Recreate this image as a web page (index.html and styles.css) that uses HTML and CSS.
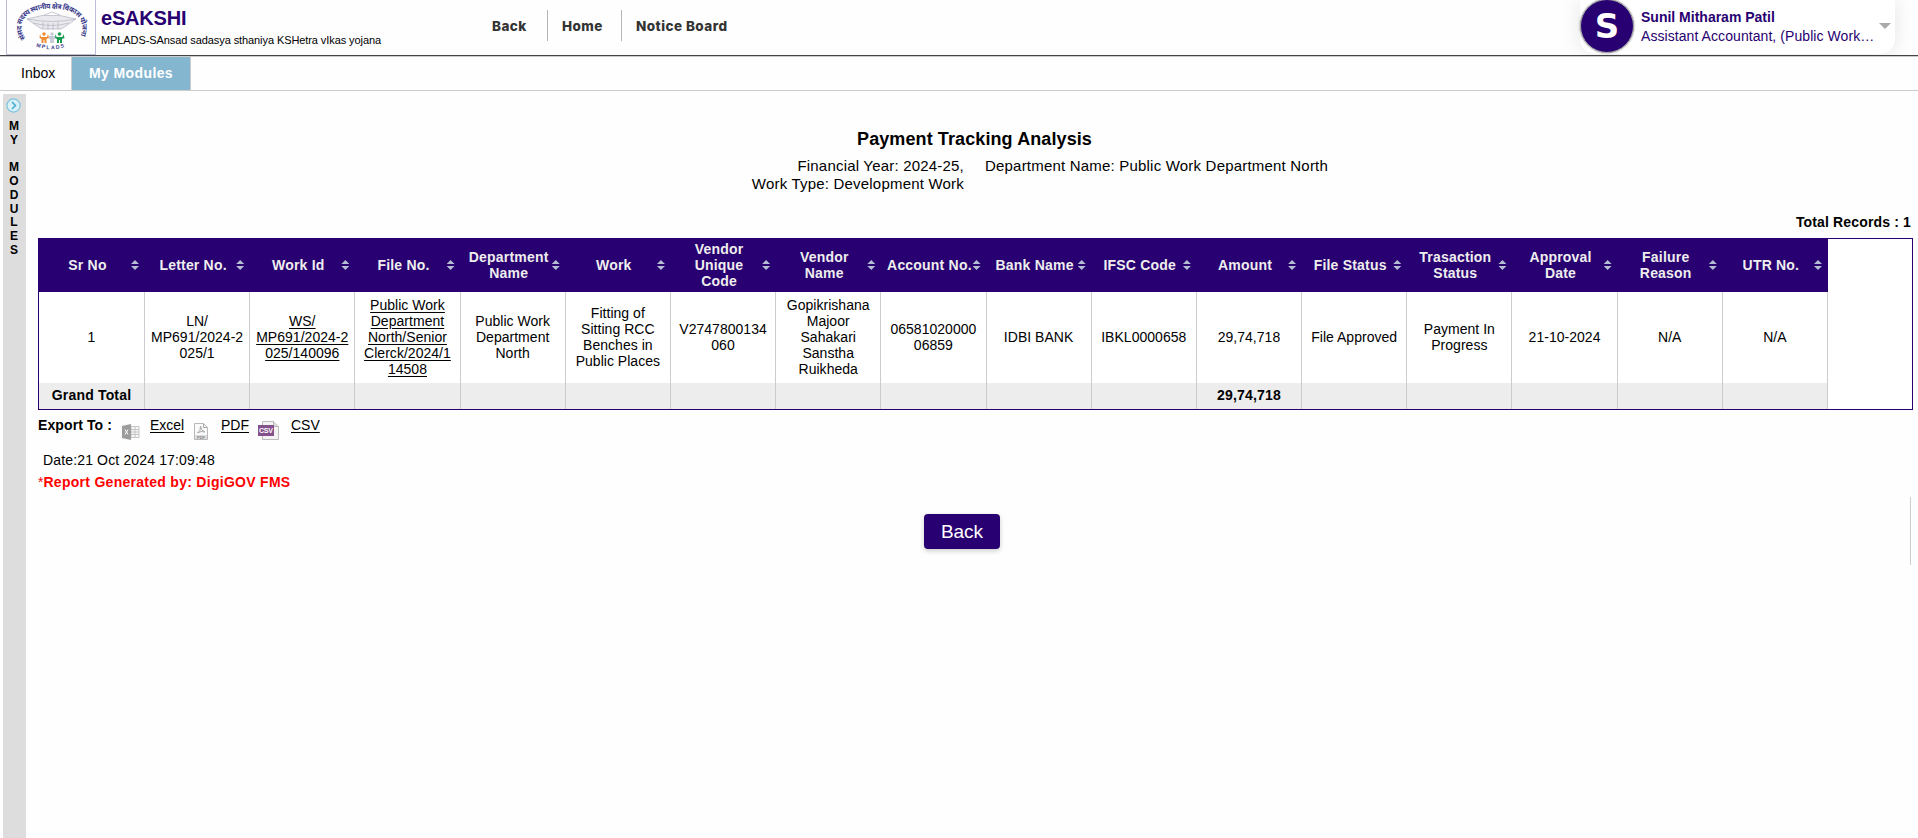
FILE: index.html
```html
<!DOCTYPE html>
<html lang="en">
<head>
<meta charset="utf-8">
<title>eSAKSHI</title>
<link rel="stylesheet" href="styles.css">
</head>
<body>
<header class="header">
  <div class="logo">
    <svg width="88" height="54" viewBox="0 0 88 54">
      <path id="arcTop" d="M19 39 C7 22 20 8.500 45 8.500 C70 8.500 82 22 71 41" fill="none"/>
      <path id="arcBottom" d="M29 46.500 Q44.500 52 61 46" fill="none"/>
      <text class="logo-hindi"><textPath href="#arcTop" textLength="100">संसद सदस्य स्थानीय क्षेत्र विकास योजना</textPath></text>
      <g fill="#e9e9ee" stroke="#b3b3c2" stroke-width=".7">
        <path d="M20 19 L35 15.500 H53 L69 19 L59 26 L54 29 H35 L30 26 Z"/>
        <path d="M20 19 Q45 24 69 19 M26 23 Q45 28 62 23 M37 15 L45 12 L53 15 M36 22 V29 M41 23 V30 M46 23 V30 M51 22 V29" fill="none"/>
      </g>
      <g fill="#ef8d32"><circle cx="37" cy="34" r="1.800"/><path d="M33 34 L34 37 H40 L41 34 L42 38 L39.500 39 V43 H37.500 V40 H36.500 V43 H34.500 V39 L32.500 38Z"/></g>
      <g fill="#c9cbd8"><circle cx="45" cy="34" r="1.700"/><path d="M42 36 H48 V39 H47 V43 H43 V39 H42Z"/></g>
      <g fill="#199b50"><circle cx="52.500" cy="34" r="1.800"/><path d="M48.500 34 L49.500 37 H55.500 L56.500 34 L57.500 38 L55 39 V43 H53 V40 H52 V43 H50 V39 L48 38Z"/></g>
      <text class="logo-latin"><textPath href="#arcBottom" textLength="29">MPLADS</textPath></text>
    </svg>
  </div>
  <div class="brand">
    <div class="brand-name">eSAKSHI</div>
    <div class="brand-sub">MPLADS-SAnsad sadasya sthaniya KSHetra vIkas yojana</div>
  </div>
  <nav class="nav"><a class="nav-back">Back</a><a class="nav-home">Home</a><a class="nav-board">Notice Board</a></nav>
  <div class="user">
    <div class="avatar">S</div>
    <div class="user-text">
      <div class="user-name">Sunil Mitharam Patil</div>
      <div class="user-role">Assistant Accountant, (Public Work…</div>
    </div>
    <span class="caret"></span>
  </div>
</header>
<div class="tabs"><div class="tab">Inbox</div><div class="tab tab-active">My Modules</div></div>
<div class="page">
  <aside class="side">
    <svg width="15" height="15" viewBox="0 0 15 15"><circle cx="7.500" cy="7.500" r="6.600" fill="#d9f1f9" stroke="#7cc3dc" stroke-width="1.200"/><path d="M6 4 L9.500 7.500 L6 11" fill="none" stroke="#45a9cc" stroke-width="1.500"/></svg>
    <div class="side-text"><span>M</span><span>Y</span><span></span><span>M</span><span>O</span><span>D</span><span>U</span><span>L</span><span>E</span><span>S</span></div>
  </aside>
  <main class="main">
    <h1 class="title">Payment Tracking Analysis</h1>
    <div class="filters">
      <div class="filters-left">Financial Year: 2024-25,<br>Work Type: Development Work</div>
      <div class="filters-right">Department Name: Public Work Department North</div>
    </div>
    <div class="records">Total Records : 1</div>
    <div class="table-box">
      <table class="grid">
        <colgroup><col class="col-first"><col span="16"></colgroup>
        <thead><tr>
          <th>Sr No<i></i></th><th>Letter No.<i></i></th><th>Work Id<i></i></th><th>File No.<i></i></th><th>Department<br>Name<i></i></th><th>Work<i></i></th><th>Vendor<br>Unique<br>Code<i></i></th><th>Vendor<br>Name<i></i></th><th>Account No.<i></i></th><th>Bank Name<i></i></th><th>IFSC Code<i></i></th><th>Amount<i></i></th><th>File Status<i></i></th><th>Trasaction<br>Status<i></i></th><th>Approval<br>Date<i></i></th><th>Failure<br>Reason<i></i></th><th>UTR No.<i></i></th>
        </tr></thead>
        <tbody>
        <tr class="row">
          <td>1</td><td>LN/<br>MP691/2024-2<br>025/1</td><td><a>WS/<br>MP691/2024-2<br>025/140096</a></td><td><a>Public Work<br>Department<br>North/Senior<br>Clerck/2024/1<br>14508</a></td><td>Public Work<br>Department<br>North</td><td>Fitting of<br>Sitting RCC<br>Benches in<br>Public Places</td><td>V2747800134<br>060</td><td>Gopikrishana<br>Majoor<br>Sahakari<br>Sanstha<br>Ruikheda</td><td>06581020000<br>06859</td><td>IDBI BANK</td><td>IBKL0000658</td><td>29,74,718</td><td>File Approved</td><td>Payment In<br>Progress</td><td>21-10-2024</td><td>N/A</td><td>N/A</td>
        </tr>
        <tr class="total">
          <td>Grand Total</td><td></td><td></td><td></td><td></td><td></td><td></td><td></td><td></td><td></td><td></td><td>29,74,718</td><td></td><td></td><td></td><td></td><td></td>
        </tr>
        </tbody>
      </table>
    </div>
    <div class="export">
      <b class="export-label">Export To :</b>
      <svg class="ic-xls" width="18" height="16" viewBox="0 0 18 16"><path d="M9 2.500h8v11H9z" fill="#f8f8f8" stroke="#c4c4c4"/><path d="M9 5.500h8M9 8h8M9 10.500h8M13 2.500v11" stroke="#c4c4c4"/><path d="M0 2 L9 0 V16 L0 14Z" fill="#9c9c9c"/><path d="M3 5.500 L6 10.500 M6 5.500 L3 10.500" stroke="#fff"/></svg>
      <a class="lk-xls">Excel</a>
      <svg class="ic-pdf" width="14" height="17" viewBox="0 0 14 17"><path d="M.5.500h9l4 4v12H.5z" fill="#fafafa" stroke="#b9b9b9"/><path d="M9.500.500v4h4M3.500 10 Q7 8 6.500 3 Q7 8 11 9 Q7 7.500 3.500 10" fill="none" stroke="#aaa"/><path d="M1 12h12v4H1z" fill="#ddd"/><text x="3" y="15.500" class="ic-pdf-text">PDF</text></svg>
      <a class="lk-pdf">PDF</a>
      <svg class="ic-csv" width="21" height="19" viewBox="0 0 21 19"><path d="M4.500.500h11l5 5v13h-16z" fill="#f3f3f3" stroke="#bcbcbc"/><path d="M15.500.500v5h5" fill="#ddd" stroke="#bcbcbc"/><path d="M0 4h16v11H0z" fill="#84518c"/><text x="1" y="12.300" class="ic-csv-text" textLength="14">CSV</text></svg>
      <a class="lk-csv">CSV</a>
    </div>
    <div class="date">Date:21 Oct 2024 17:09:48</div>
    <div class="note"><span>*</span>Report Generated by: DigiGOV FMS</div>
    <div class="actions"><button class="btn">Back</button></div>
  </main>
</div>
</body>
</html>
```
FILE: styles.css
```css
* { box-sizing: border-box; }
body { margin: 0; height: 838px; overflow: hidden; background: #fefefe; color: #000; font: 14px/16px "Liberation Sans", Arial, sans-serif; display: flex; flex-direction: column; }
.header { height: 57px; flex: none; display: flex; border-bottom: 1px solid #ccc; box-shadow: inset 0 -1px #444; overflow: hidden; }
.logo { width: 90px; height: 55px; margin-left: 6px; border: 1px solid #bcbcdc; border-top: 0; }
.logo svg { display: block; }
.logo-hindi { font: 700 7.2px "Noto Sans Devanagari", "Noto Sans", sans-serif; fill: #3b3b8c; }
.logo-latin { font: 700 5.2px "Liberation Sans", sans-serif; fill: #3b3b8c; }
.brand { width: 391px; padding: 7px 0 0 5px; white-space: nowrap; }
.brand-name { font-size: 20px; line-height: 22px; font-weight: 700; color: #280071; letter-spacing: -.2px; }
.brand-sub { font-size: 11px; line-height: 14px; margin-top: 4px; letter-spacing: -.085px; }
.nav { display: flex; height: 31px; margin-top: 10px; font: 800 13.500px/32px Inter, sans-serif; letter-spacing: .45px; color: #333; white-space: nowrap; }
.nav-back { width: 61px; padding-left: 5px; border-right: 1px solid #b5b5b5; }
.nav-home { width: 74px; padding-left: 14px; border-right: 1px solid #b5b5b5; }
.nav-board { padding-left: 14px; }
.user { margin-left: auto; margin-right: 23px; width: 315px; height: 54px; display: flex; border-radius: 0 0 15px 15px; background: #fff; box-shadow: 0 0 20px rgba(0,0,0,.1); }
.avatar { width: 54px; height: 54px; margin-top: -1px; border: 1px solid #aaa; border-radius: 50%; background: #280071; color: #fff; font: 700 34px/52px "DejaVu Sans", sans-serif; text-align: center; box-shadow: 0 0 2px #777; }
.user-text { width: 240px; padding: 8px 0 0 7px; color: #280071; white-space: nowrap; }
.user-name { font-weight: 700; line-height: 18px; }
.user-role { line-height: 18px; margin-top: 1px; letter-spacing: .07px; }
.caret { margin: 23px 0 0 5px; border: 6px solid transparent; border-top-color: #aaa; border-bottom: 0; height: 0; }
.tabs { display: flex; height: 34px; flex: none; border-bottom: 1px solid #ccc; line-height: 32px; }
.tab { width: 71px; padding-left: 21px; }
.tab-active { width: 120px; padding: 0; text-align: center; background: #84b6d0; border: solid #ccc; border-width: 0 1px; color: #fff; font-weight: 700; letter-spacing: .4px; }
.page { display: flex; flex: 1; padding: 3px 0 0 3px; }
.side { width: 23px; background: #ddd; padding-top: 4px; }
.side svg { display: block; margin-left: 3px; }
.side-text { display: flex; flex-direction: column; align-items: center; margin-top: 6px; font-size: 12px; font-weight: 700; width: 22px; }
.side-text span { height: 13.75px; line-height: 14px; }
.main { width: 1875px; margin-left: 12px; }
.title { margin: 34px 0 0; padding-right: 2px; text-align: center; font-size: 18px; line-height: 22px; letter-spacing: .1px; }
.filters { display: flex; gap: 21px; margin-top: 7px; font-size: 15px; line-height: 18px; letter-spacing: .2px; }
.filters-left { width: 926px; text-align: right; }
.records { margin: 21px 2px 8px; text-align: right; font-weight: 700; line-height: 16px; letter-spacing: .15px; }
.table-box { border: 1px solid #280071; height: 172px; background: #fff; }
.grid { width: 1789px; table-layout: fixed; border-spacing: 0; border-collapse: separate; text-align: center; }
.col-first { width: 106px; }
.grid th, .grid td { padding: 0 0 2px; vertical-align: middle; }
.grid th { height: 53px; background: #280071; color: #eee; padding-right: 9px; position: relative; white-space: nowrap; letter-spacing: .2px; }
.grid th i { position: absolute; right: 6px; top: 21px; width: 8px; height: 10px; background: #b4bdd2; clip-path: polygon(50% 0, 100% 40%, 0 40%, 0 60%, 100% 60%, 50% 100%, 0 60%, 0 40%); }
.grid td { border-right: 1px solid #ccc; white-space: nowrap; letter-spacing: .03px; }
.row td { height: 91px; }
.row a, .export a { text-decoration: underline; text-underline-offset: 2px; }
.total td { height: 26px; background: #ededed; font-weight: 700; letter-spacing: .18px; }
.export { display: flex; align-items: flex-start; height: 26px; padding-top: 7px; }
.export-label { width: 84px; letter-spacing: .1px; }
.ic-xls { margin-top: 7px; }
.lk-xls { margin-left: 10px; width: 44px; }
.ic-pdf { margin-top: 6px; }
.lk-pdf { margin-left: 13px; width: 37px; }
.ic-csv { margin-top: 4px; }
.lk-csv { margin-left: 12px; }
.ic-pdf-text { font: 700 4px "Liberation Sans", sans-serif; fill: #888; }
.ic-csv-text { font: 700 7px "Liberation Sans", sans-serif; fill: #fff; }
.date { margin: 16px 0 0 5px; letter-spacing: .15px; }
.note { margin-top: 6px; color: red; font-weight: 700; letter-spacing: .28px; }
.note span { font-weight: 400; letter-spacing: 0; }
.actions { margin-top: 7px; height: 68px; border-right: 1px solid #ccc; width: 1873px; padding: 17px 0 0 886px; }
.btn { display: block; width: 76px; height: 35px; padding: 0; border: 0; border-radius: 4px; background: #280071; color: #fff; font: 19px/35px "Liberation Sans", Arial, sans-serif; box-shadow: 0 2px 5px rgba(0,0,0,.2); }
```
